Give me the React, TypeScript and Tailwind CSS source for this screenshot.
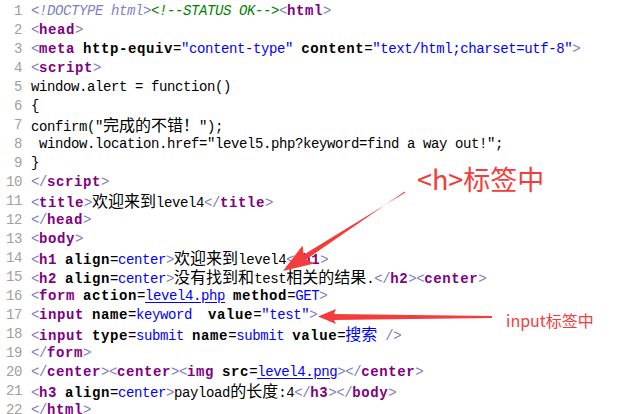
import React from 'react';

type Kind = 'b' | 't' | 'a' | 'v' | 'p' | 'l' | 'd' | 'g';
type Seg = [Kind, string];

const KIND_CLASS: Record<Kind, string> = {
  b: 'text-[#8080c0]',
  t: 'text-[#800080] font-bold tracking-[0.6px]',
  a: 'text-black font-bold tracking-[0.6px]',
  v: 'text-[#0000ff]',
  p: 'text-black',
  l: 'text-[#0000ff] underline underline-offset-2',
  d: 'text-[#8080c0] italic',
  g: 'text-[#008000] italic',
};

const CJK = /([\u3000-\u9fff\uff00-\uffef]+)/;

const LINES: Seg[][] = [
  [['d', '<!DOCTYPE html>'], ['g', '<!--STATUS OK-->'], ['b', '<'], ['t', 'html'], ['b', '>']],
  [['b', '<'], ['t', 'head'], ['b', '>']],
  [['b', '<'], ['t', 'meta'], ['p', ' '], ['a', 'http-equiv'], ['p', '='], ['v', '"content-type"'], ['p', ' '], ['a', 'content'], ['p', '='], ['v', '"text/html;charset=utf-8"'], ['b', '>']],
  [['b', '<'], ['t', 'script'], ['b', '>']],
  [['p', 'window.alert = function()']],
  [['p', '{']],
  [['p', 'confirm("完成的不错！");']],
  [['p', ' window.location.href="level5.php?keyword=find a way out!";']],
  [['p', '}']],
  [['b', '</'], ['t', 'script'], ['b', '>']],
  [['b', '<'], ['t', 'title'], ['b', '>'], ['p', '欢迎来到level4'], ['b', '</'], ['t', 'title'], ['b', '>']],
  [['b', '</'], ['t', 'head'], ['b', '>']],
  [['b', '<'], ['t', 'body'], ['b', '>']],
  [['b', '<'], ['t', 'h1'], ['p', ' '], ['a', 'align'], ['p', '='], ['v', 'center'], ['b', '>'], ['p', '欢迎来到level4'], ['b', '</'], ['t', 'h1'], ['b', '>']],
  [['b', '<'], ['t', 'h2'], ['p', ' '], ['a', 'align'], ['p', '='], ['v', 'center'], ['b', '>'], ['p', '没有找到和test相关的结果.'], ['b', '</'], ['t', 'h2'], ['b', '><'], ['t', 'center'], ['b', '>']],
  [['b', '<'], ['t', 'form'], ['p', ' '], ['a', 'action'], ['p', '='], ['l', 'level4.php'], ['p', ' '], ['a', 'method'], ['p', '='], ['v', 'GET'], ['b', '>']],
  [['b', '<'], ['t', 'input'], ['p', ' '], ['a', 'name'], ['p', '='], ['v', 'keyword'], ['p', '  '], ['a', 'value'], ['p', '='], ['v', '"test"'], ['b', '>']],
  [['b', '<'], ['t', 'input'], ['p', ' '], ['a', 'type'], ['p', '='], ['v', 'submit'], ['p', ' '], ['a', 'name'], ['p', '='], ['v', 'submit'], ['p', ' '], ['a', 'value'], ['p', '='], ['v', '搜索'], ['p', ' '], ['b', '/>']],
  [['b', '</'], ['t', 'form'], ['b', '>']],
  [['b', '</'], ['t', 'center'], ['b', '><'], ['t', 'center'], ['b', '><'], ['t', 'img'], ['p', ' '], ['a', 'src'], ['p', '='], ['l', 'level4.png'], ['b', '></'], ['t', 'center'], ['b', '>']],
  [['b', '<'], ['t', 'h3'], ['p', ' '], ['a', 'align'], ['p', '='], ['v', 'center'], ['b', '>'], ['p', 'payload的长度:4'], ['b', '</'], ['t', 'h3'], ['b', '></'], ['t', 'body'], ['b', '>']],
  [['b', '</'], ['t', 'html'], ['b', '>']],
];

const Segment: React.FC<{ seg: Seg }> = ({ seg }) => {
  const [kind, text] = seg;
  const parts = text.split(CJK).filter((s) => s.length > 0);
  return (
    <span className={KIND_CLASS[kind]}>
      {parts.map((part, i) =>
        CJK.test(part) ? (
          <span key={i} className="text-[16px] leading-none tracking-normal font-normal not-italic font-['Noto_Sans_CJK_SC',sans-serif]">
            {part}
          </span>
        ) : (
          <span key={i}>{part}</span>
        )
      )}
    </span>
  );
};

const App: React.FC = () => {
  return (
    <div className="relative w-[640px] h-[414px] overflow-hidden bg-white">
      {/* code listing */}
      <div className="pt-[2px] font-['Liberation_Mono','Noto_Sans_CJK_SC',monospace] text-[14px] tracking-[-0.4px]">
        {LINES.map((line, i) => (
          <div key={i} className="flex h-[19px] leading-[19px] whitespace-pre">
            <span className="w-[22px] shrink-0 text-right text-[#a0a0a0]">{i + 1}</span>
            <span className="ml-[9px]">
              {line.map((seg, j) => (
                <Segment key={j} seg={seg} />
              ))}
            </span>
          </div>
        ))}
      </div>

      {/* annotation arrows */}
      <svg className="absolute inset-0 pointer-events-none" width="640" height="414" viewBox="0 0 640 414">
        <polygon
          points="283,271 302.5,245.5 303.6,254.8 405.4,192.6 404.6,191.4 306.3,259.3 314.2,263.6"
          fill="#f53c3c"
        />
        <polygon
          points="318,316.5 336,309 334,314 492,316 492,318 334,320 336,324"
          fill="#f53c3c"
        />
      </svg>

      {/* annotation labels */}
      <div className="absolute left-[417px] top-[162px] text-[27px] leading-[34px] text-[#f53c3c] font-['Noto_Sans_CJK_SC','Noto_Sans',sans-serif]">
        &lt;h&gt;标签中
      </div>
      <div className="absolute left-[506px] top-[309px] text-[16px] leading-[22px] text-[#f53c3c] font-['Noto_Sans_CJK_SC','Noto_Sans',sans-serif]">
        input标签中
      </div>
    </div>
  );
};

export default App;
